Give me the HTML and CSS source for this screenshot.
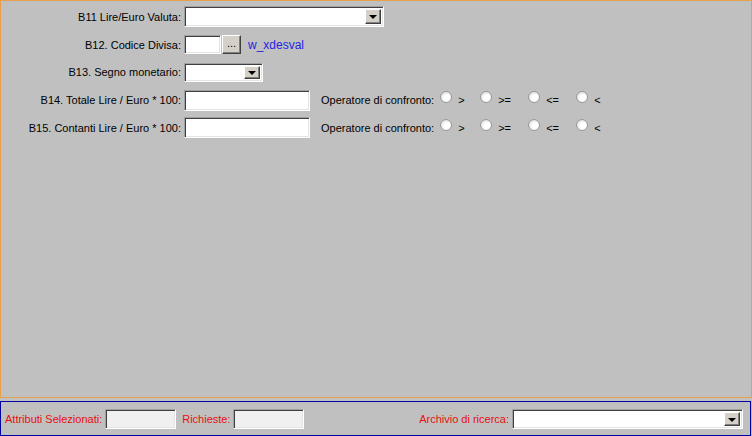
FILE: index.html
```html
<!DOCTYPE html>
<html>
<head>
<meta charset="utf-8">
<link rel="stylesheet" href="styles.css">
</head>
<body>
<div class="main">
  <div class="row">
    <label class="lbl">B11 Lire/Euro Valuta:</label>
    <div class="select sel-wide"><span class="drop"><i></i></span></div>
  </div>
  <div class="row">
    <label class="lbl">B12. Codice Divisa:</label>
    <div class="input in-code"></div>
    <button class="dots">...</button>
    <span class="link">w_xdesval</span>
  </div>
  <div class="row">
    <label class="lbl">B13. Segno monetario:</label>
    <div class="select sel-small"><span class="drop"><i></i></span></div>
  </div>
  <div class="row">
    <label class="lbl">B14. Totale Lire / Euro * 100:</label>
    <div class="input in-num"></div>
    <span class="op">Operatore di confronto:</span>
    <span class="radio"></span><span class="rl rl-a">&gt;</span>
    <span class="radio"></span><span class="rl rl-b">&gt;=</span>
    <span class="radio"></span><span class="rl rl-b">&lt;=</span>
    <span class="radio"></span><span class="rl">&lt;</span>
  </div>
  <div class="row">
    <label class="lbl">B15. Contanti Lire / Euro * 100:</label>
    <div class="input in-num"></div>
    <span class="op">Operatore di confronto:</span>
    <span class="radio"></span><span class="rl rl-a">&gt;</span>
    <span class="radio"></span><span class="rl rl-b">&gt;=</span>
    <span class="radio"></span><span class="rl rl-b">&lt;=</span>
    <span class="radio"></span><span class="rl">&lt;</span>
  </div>
</div>
<div class="footer">
  <span class="red">Attributi Selezionati:</span>
  <div class="input grey in-foot"></div>
  <span class="red rich">Richieste:</span>
  <div class="input grey in-foot"></div>
  <span class="red arch">Archivio di ricerca:</span>
  <div class="select sel-foot"><span class="drop"><i></i></span></div>
</div>
</body>
</html>
```
FILE: styles.css
```css
html, body {
  margin: 0;
  padding: 0;
}
body {
  width: 752px;
  height: 436px;
  background: #c0c0c0;
  font-family: "Liberation Sans", Arial, sans-serif;
  font-size: 11px;
  color: #000;
  overflow: hidden;
}
.main {
  box-sizing: border-box;
  width: 752px;
  height: 398px;
  border: 1px solid #e6a04e;
  padding-top: 2px;
  display: flex;
  flex-direction: column;
}
.row {
  height: 27.75px;
  display: flex;
  align-items: center;
}
.lbl {
  width: 180px;
  text-align: right;
  margin-right: 3px;
  white-space: nowrap;
  flex-shrink: 0;
}
.input, .select {
  box-sizing: border-box;
  background: #fff;
  border: 1px solid;
  border-color: #a0a0a0 #ffffff #ffffff #a0a0a0;
  box-shadow: inset 1px 1px 0 #404040, inset -1px -1px 0 #e4e4e4;
  position: relative;
  flex-shrink: 0;
}
.sel-wide { width: 200px; height: 21px; }
.sel-small { width: 79px; height: 19px; }
.in-code { width: 37px; height: 19px; }
.in-num { width: 126px; height: 21px; }
.drop {
  position: absolute;
  right: 2px;
  top: 2px;
  bottom: 2px;
  width: 16px;
  box-sizing: border-box;
  background: #d4d0c8;
  border: 1px solid;
  border-color: #ffffff #404040 #404040 #ffffff;
  box-shadow: inset -1px -1px 0 #808080;
  display: flex;
  align-items: center;
  justify-content: center;
}
.drop i {
  width: 0;
  height: 0;
  border-left: 4px solid transparent;
  border-right: 4px solid transparent;
  border-top: 4px solid #000;
  margin-top: 1px;
}
.dots {
  box-sizing: border-box;
  width: 19px;
  height: 19px;
  margin-left: 1px;
  padding: 0 0 4px 0;
  font-family: "Liberation Sans", Arial, sans-serif;
  font-size: 11px;
  background: #d4d0c8;
  border: 1px solid;
  border-color: #ffffff #404040 #404040 #ffffff;
  box-shadow: inset -1px -1px 0 #808080;
  color: #000;
  line-height: 1;
  display: flex;
  align-items: flex-end;
  justify-content: center;
  flex-shrink: 0;
}
.link {
  color: #2424e6;
  margin-left: 7px;
  font-size: 12px;
}
.op {
  margin-left: 11px;
  margin-right: 6px;
  white-space: nowrap;
  flex-shrink: 0;
}
.radio {
  box-sizing: border-box;
  width: 12px;
  height: 12px;
  border-radius: 50%;
  border: 1px solid #9a9a9a;
  background: radial-gradient(circle at 60% 60%, #ffffff 0 35%, #dcdcdc 80%);
  margin-top: -6px;
  flex-shrink: 0;
}
.rl {
  margin-left: 6px;
  flex-shrink: 0;
}
.rl-a { width: 22px; }
.rl-b { width: 30px; }
.footer {
  box-sizing: border-box;
  width: 751px;
  height: 35px;
  margin-top: 3px;
  border: 1px solid #0000a0;
  display: flex;
  align-items: center;
  padding-left: 4px;
  padding-top: 1px;
}
.red { color: #e81010; white-space: nowrap; }
.grey { background: #f0f0f0; }
.in-foot { width: 71px; height: 20px; margin-left: 3px; }
.rich { margin-left: 6px; }
.rich + .in-foot { margin-left: 2px; }
.arch { margin-left: auto; margin-right: 3px; }
.sel-foot { width: 231px; height: 20px; margin-right: 7px; }
```
